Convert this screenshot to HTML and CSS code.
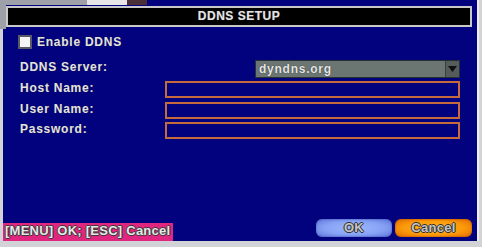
FILE: index.html
```html
<!DOCTYPE html>
<html>
<head>
<meta charset="utf-8">
<link rel="stylesheet" href="styles.css">
</head>
<body>
<div class="screen">
  <div class="bg-top">
    <span class="bg-gray"></span><span class="bg-white"></span><span class="bg-brown"></span>
  </div>
  <div class="bg-left"></div>
  <div class="panel">
    <div class="titlebar">DDNS SETUP</div>
    <div class="form">
      <div class="row row-check">
        <span class="checkbox"></span>
        <span class="label">Enable DDNS</span>
      </div>
      <div class="row row-server">
        <span class="label">DDNS Server:</span>
        <div class="select">
          <span class="select-value">dyndns.org</span>
          <span class="select-arrow">
            <svg width="9" height="6" viewBox="0 0 9 6"><path d="M0 0H9L4.5 6Z" fill="#101010"/></svg>
          </span>
        </div>
      </div>
      <div class="row row-field">
        <span class="label">Host Name:</span>
        <div class="field"></div>
      </div>
      <div class="row row-field">
        <span class="label">User Name:</span>
        <div class="field"></div>
      </div>
      <div class="row row-field">
        <span class="label">Password:</span>
        <div class="field"></div>
      </div>
    </div>
    <div class="footer">
      <div class="hint">[MENU] OK; [ESC] Cancel</div>
      <div class="buttons">
        <div class="btn btn-ok">OK</div>
        <div class="btn btn-cancel">Cancel</div>
      </div>
    </div>
  </div>
</div>
</body>
</html>
```

FILE: styles.css
```css
html, body {
  margin: 0;
  padding: 0;
}
body {
  background: #d2d3d6;
  font-family: "Liberation Sans", Arial, sans-serif;
  font-weight: bold;
  width: 482px;
  height: 247px;
  overflow: hidden;
}
.screen {
  position: relative;
  width: 482px;
  height: 247px;
}
.bg-top {
  position: absolute;
  left: 0;
  top: 0;
  height: 5px;
  display: flex;
  z-index: 2;
}
.bg-gray { width: 87px; background: #9ea2a8; }
.bg-white { width: 40px; background: #e6e6e8; }
.bg-brown { width: 20px; background: #4a3036; }
.bg-left {
  position: absolute;
  left: 0;
  top: 0;
  width: 6px;
  height: 29px;
  background: #9ea2a8;
  z-index: 2;
}
.panel {
  margin-left: 3px;
  width: 474px;
  height: 241px;
  background: #02027e;
  display: flex;
  flex-direction: column;
  box-shadow: 2px 0 0 #eeeef2;
}
.titlebar {
  margin: 6px 0 0 3px;
  width: 462px;
  height: 17px;
  border: 2px solid #c9c9c9;
  background: #000;
  color: #e4e4e4;
  font-size: 12px;
  line-height: 17px;
  text-align: center;
  letter-spacing: 0.5px;
  text-shadow: 0 0 1px #606060;
}
.form {
  display: flex;
  flex-direction: column;
  padding: 0 17px 0 17px;
}
.row {
  display: flex;
  align-items: flex-start;
}
.label {
  color: #e2e2e2;
  font-size: 12px;
  line-height: 14px;
  letter-spacing: 0.75px;
  text-shadow: 0 0 1px #202030;
}
.row-check {
  margin-top: 8px;
  height: 13px;
}
.checkbox {
  width: 10px;
  height: 10px;
  margin: 0 5px 0 -2px;
  border: 2px solid #5a5a64;
  background: #f4f4f4;
}
.row-server {
  margin-top: 12px;
  height: 18px;
}
.select {
  margin-left: auto;
  width: 203px;
  height: 16px;
  border: 1px solid #2a3032;
  background: #6b7572;
  display: flex;
  align-items: stretch;
}
.select-value {
  flex: 1;
  color: #e6e6e6;
  font-size: 12px;
  line-height: 16px;
  padding-left: 3px;
  letter-spacing: 0.75px;
  text-shadow: 0 0 1px #202020;
}
.select-arrow {
  width: 13px;
  background: #545c5c;
  border-left: 1px solid #3a4040;
  display: flex;
  align-items: center;
  justify-content: center;
}
.row-field {
  margin-top: 3.5px;
  height: 17px;
}
.row-server + .row-field {
  margin-top: 3px;
}
.field {
  margin-left: auto;
  width: 291px;
  height: 13px;
  border: 2px solid #c56a3c;
  background: #02027e;
}
.footer {
  margin-top: auto;
  display: flex;
  align-items: flex-end;
}
.hint {
  width: 168px;
  height: 18px;
  padding-left: 2px;
  background: #e0267e;
  color: #e8e8e8;
  font-size: 13px;
  line-height: 16px;
  letter-spacing: 0.25px;
  white-space: nowrap;
  text-shadow: 1px 0 0 #3a3a3a, -1px 0 0 #3a3a3a, 0 1px 0 #3a3a3a, 0 -1px 0 #3a3a3a;
}
.buttons {
  margin-left: auto;
  margin-right: 5px;
  margin-bottom: 4px;
  display: flex;
  gap: 3px;
}
.btn {
  height: 18px;
  border-radius: 6px;
  font-size: 13px;
  line-height: 18px;
  text-align: center;
  color: #c4c4c4;
  letter-spacing: 0.3px;
  text-shadow: 1px 0 0 #303030, -1px 0 0 #303030, 0 1px 0 #303030, 0 -1px 0 #303030;
}
.btn-ok {
  width: 76px;
  background: radial-gradient(ellipse at center, #9cb8ff 0%, #86a2f4 55%, #5e72d8 100%);
  box-shadow: inset 0 0 2px #3848b0;
}
.btn-cancel {
  width: 77px;
  background: radial-gradient(ellipse at center, #ffb21e 0%, #fb9a0a 55%, #e06a00 100%);
  box-shadow: inset 0 0 2px #a04000;
}
```
